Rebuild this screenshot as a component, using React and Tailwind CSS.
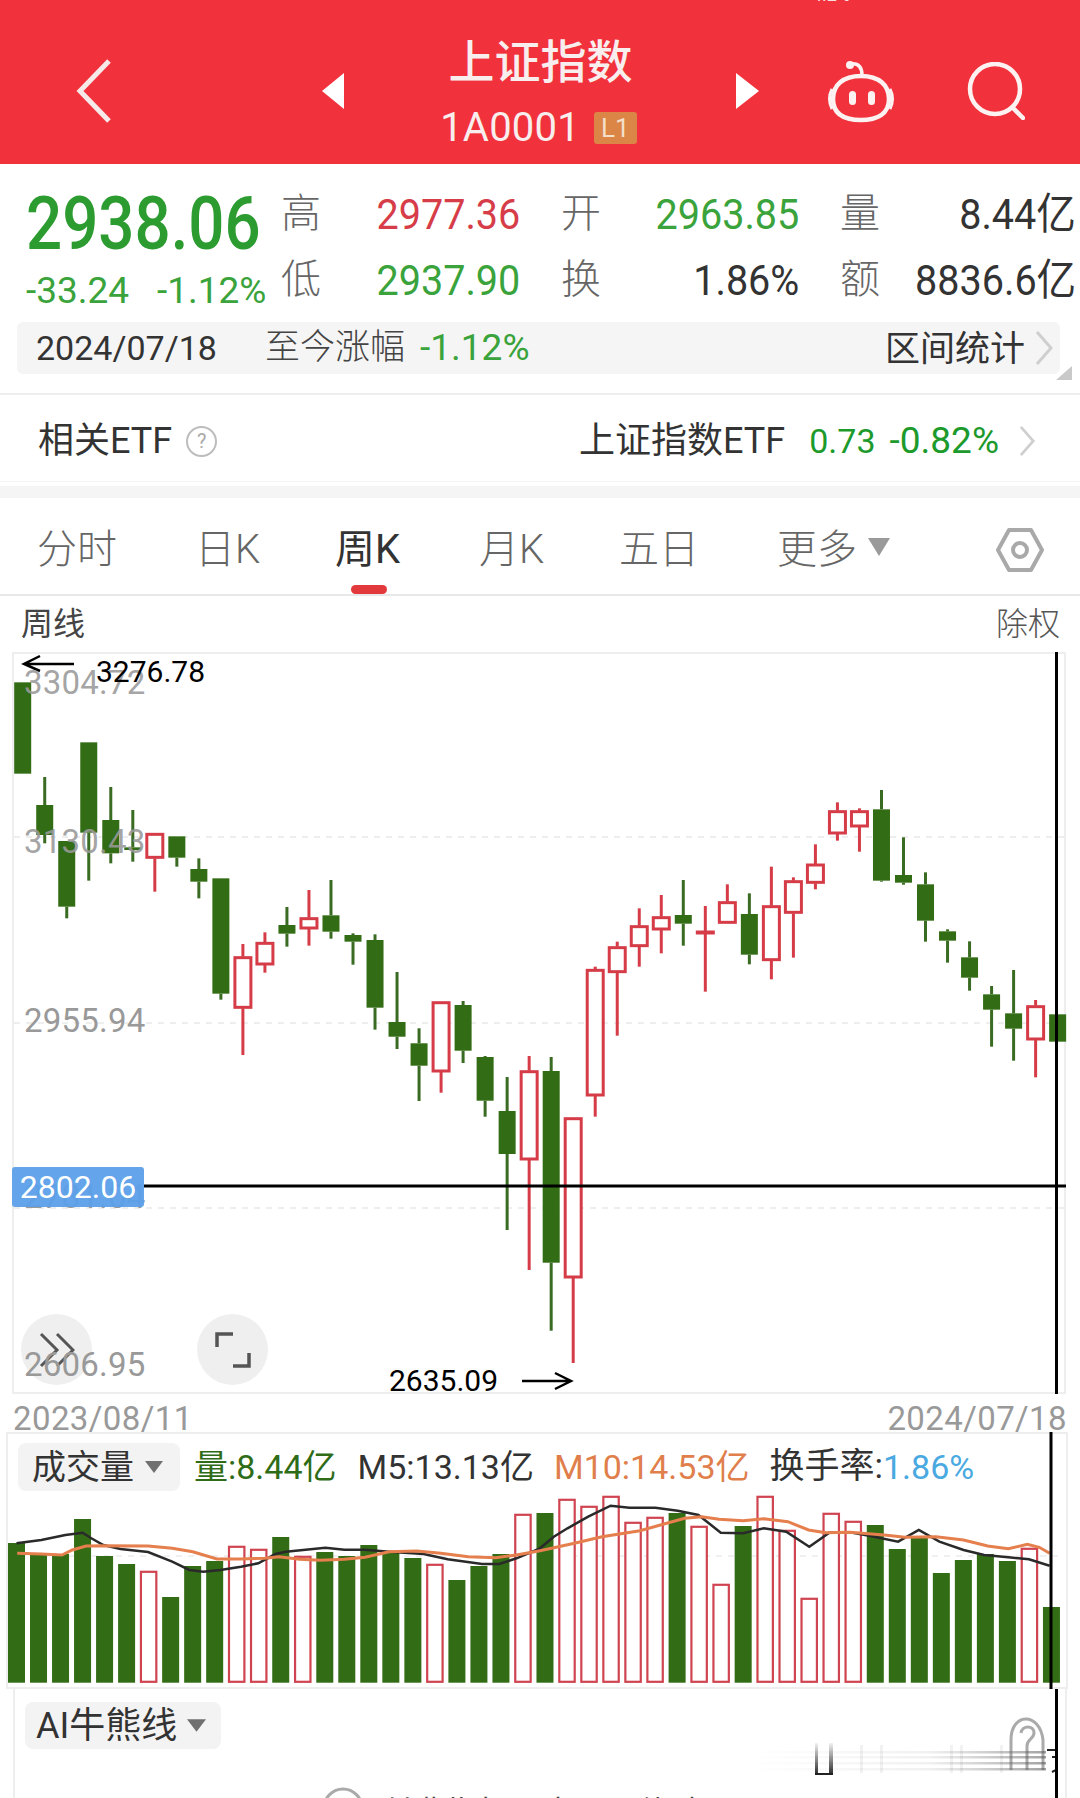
import React from "react";

const A = (v) => 650 + v / 3;
const B = (v) => 750 + v / 3;
const G = "#326c14";
const R = "#d53c47";

// kind, wick top, body top, body bottom, wick bottom (page y)
const candles = [
  ["g", A(97), A(97), A(371), A(371)],
  ["g", A(381), A(465), A(555), A(580)],
  ["g", A(573), A(573), A(770), A(805)],
  ["g", A(277), A(277), A(548), A(692)],
  ["g", A(411), A(510), A(610), A(640)],
  ["g", A(480), A(592), A(600), A(635)],
  ["r", A(550), A(550), A(625), A(725)],
  ["g", A(559), A(559), A(623), A(650)],
  ["g", A(625), A(657), A(695), A(745)],
  ["g", A(685), A(685), A(1031), A(1049)],
  ["r", A(882), A(920), A(1075), 1055],
  ["r", A(847), A(877), A(945), A(968)],
  ["g", A(771), A(825), A(851), A(890)],
  ["r", A(720), A(803), A(837), A(887)],
  ["g", A(690), A(796), A(845), A(866)],
  ["g", A(850), A(855), A(875), A(944)],
  ["g", A(853), A(870), A(1073), A(1139)],
  ["g", 972, 1022, 1036.7, 1049],
  ["g", 1028.3, 1043.3, 1065.7, 1101],
  ["r", 1001.7, 1001.7, 1072, 1092.7],
  ["g", 1001, 1005, 1050.7, 1063],
  ["g", 1056, 1057, 1100.7, 1116.7],
  ["g", 1077, 1111, 1154, 1230],
  ["r", 1056, 1070.7, 1160, 1270],
  ["g", 1057, 1071, 1262.7, 1330.7],
  ["r", 1117.7, 1117.7, 1278, 1363],
  ["r", B(650), B(658), B(1038), B(1100)],
  ["r", B(575), B(590), B(668), B(857)],
  ["r", B(475), B(527), B(590), B(650)],
  ["r", B(435), B(500), B(540), B(610)],
  ["g", B(390), B(495), B(521), B(587)],
  ["r", B(468), B(543), B(547), B(725)],
  ["r", B(403), B(455), B(520), B(520)],
  ["g", B(430), B(492), B(614), B(643)],
  ["r", B(350), B(467), B(632), B(688)],
  ["r", B(382), B(392), B(490), B(623)],
  ["r", B(283), B(342), B(400), B(418)],
  ["r", B(157), B(182), B(252), B(272)],
  ["r", B(175), B(182), B(231), B(305)],
  ["g", B(120), B(178), B(392), B(395)],
  ["g", B(262), B(375), B(398), B(404)],
  ["g", B(367), B(403), B(512), B(575)],
  ["g", B(538), B(544), B(572), B(638)],
  ["g", B(574), B(622), B(683), B(722)],
  ["g", B(708), B(733), B(779), B(890)],
  ["g", B(660), B(790), B(836), B(932)],
  ["r", B(750), B(767), B(870), B(982)],
  ["g", B(793), B(793), B(875), B(875)],
];

const volumes = [
  ["g", 429], ["g", 462], ["g", 462], ["g", 357], ["g", 468], ["g", 492], ["r", 513], ["g", 591],
  ["g", 498], ["g", 483], ["r", 438], ["r", 447], ["g", 411], ["r", 468], ["g", 456], ["g", 468],
  ["g", 435], ["g", 456], ["g", 474], ["r", 492], ["g", 540], ["g", 498], ["g", 462], ["r", 342],
  ["g", 339], ["r", 297], ["r", 318], ["r", 288], ["r", 366], ["r", 351], ["g", 339], ["r", 378],
  ["r", 552], ["g", 378], ["r", 288], ["r", 390], ["r", 594], ["r", 339], ["r", 363], ["g", 375],
  ["g", 447], ["g", 414], ["g", 519], ["g", 480], ["g", 462], ["g", 483], ["r", 444], ["g", 621],
];

const toPts = (left, right) =>
  [
    ...left.map(([x, y]) => `${(x / 2.904).toFixed(1)},${(1400 + y / 3).toFixed(1)}`),
    ...right.map(([x, y]) => `${(540 + x / 2.904).toFixed(1)},${(1400 + y / 3).toFixed(1)}`),
  ].join(" ");

const blackLine = toPts(
  [[48,430],[120,420],[190,405],[240,398],[265,415],[300,435],[350,447],[430,456],[500,485],[550,510],[590,515],[640,510],[700,500],[750,490],[800,462],[830,455],[945,443],[1000,449],[1060,449],[1130,455],[1230,462],[1300,478],[1400,492],[1450,492],[1500,475]],
  [[0,445],[40,410],[80,385],[140,350],[205,317],[260,323],[335,323],[400,332],[460,345],[525,398],[590,400],[650,385],[715,395],[782,440],[840,398],[900,397],[960,408],[1040,425],[1100,390],[1160,425],[1230,450],[1290,465],[1360,472],[1420,478],[1480,497]]
);
const orangeLine = toPts(
  [[50,460],[120,462],[180,465],[210,450],[250,438],[300,437],[430,438],[500,445],[560,455],[630,477],[700,477],[770,475],[810,470],[870,478],[930,481],[1000,478],[1060,472],[1130,455],[1210,453],[1280,460],[1360,470],[1440,473],[1500,465]],
  [[0,452],[100,430],[180,410],[290,392],[360,372],[420,355],[470,350],[520,358],[590,362],[650,356],[720,365],[780,390],[830,398],[900,397],[1000,405],[1060,412],[1150,410],[1230,420],[1300,438],[1360,446],[1415,433],[1450,442],[1480,460]]
);

function Chevron({ className }) {
  return (
    <svg viewBox="0 0 19 36" className={className} fill="none" stroke="#cfcfcf" strokeWidth="3">
      <path d="M2 2 L16 18 L2 34" />
    </svg>
  );
}

function Tri({ className }) {
  return (
    <svg viewBox="0 0 18 12" className={className} fill="#707070">
      <path d="M0 0 H18 L9 12 Z" />
    </svg>
  );
}

function CandleChart() {
  return (
    <svg viewBox="0 652 1080 742" className="absolute inset-0 w-[1080px] h-[742px]">
      {[837, 1023, 1208].map((y) => (
        <line key={y} x1="14" x2="1064" y1={y} y2={y} stroke="#e9e9e9" strokeWidth="1.5" strokeDasharray="6 6" />
      ))}
      {candles.map(([k, wt, bt, bb, wb], i) => {
        const x = 22.7 + 22.02 * i;
        const c = k === "g" ? "#3a6b22" : R;
        return (
          <g key={i}>
            <line x1={x} x2={x} y1={wt} y2={bt} stroke={c} strokeWidth="3" />
            <line x1={x} x2={x} y1={bb} y2={wb} stroke={c} strokeWidth="3" />
            {k === "g" ? (
              <rect x={x - 8.5} y={bt} width="17" height={bb - bt} fill={G} />
            ) : (
              <rect x={x - 8} y={bt + 1} width="16" height={Math.max(bb - bt - 2, 1)} fill="#fff" stroke={R} strokeWidth="3" />
            )}
          </g>
        );
      })}
      <line x1="144" x2="1066" y1="1186" y2="1186" stroke="#000" strokeWidth="3" />
      <line x1="1056.5" x2="1056.5" y1="652" y2="1394" stroke="#000" strokeWidth="3" />
      <path d="M74 664 H24 M40 656 L24 664 L40 671" fill="none" stroke="#000" strokeWidth="2.5" />
      <path d="M522 1381 H571 M555 1373 L571 1381 L555 1389" fill="none" stroke="#000" strokeWidth="2.5" />
    </svg>
  );
}

function VolumeChart() {
  return (
    <svg viewBox="0 1432 1080 258" className="absolute inset-0 w-[1080px] h-[258px]">
      <line x1="8" x2="1064" y1="1556" y2="1556" stroke="#ececec" strokeWidth="1.5" strokeDasharray="6 6" />
      {volumes.map(([k, v], i) => {
        const x = 16.5 + 22.02 * i;
        const t = 1400 + v / 3;
        return k === "g" ? (
          <rect key={i} x={x - 8.5} y={t} width="17" height={1682.7 - t} fill={G} />
        ) : (
          <rect key={i} x={x - 7.7} y={t + 0.8} width="15.4" height={1681 - t} fill="#fff" stroke="#cf4450" strokeWidth="2.2" />
        );
      })}
      <polyline points={blackLine} fill="none" stroke="#2a2a2a" strokeWidth="2.5" />
      <polyline points={orangeLine} fill="none" stroke="#e57f4d" strokeWidth="3" />
      <line x1="1051" x2="1051" y1="1432" y2="1689" stroke="#000" strokeWidth="3" />
    </svg>
  );
}

function Tab({ children, className }) {
  return <span className={"text-[40px] leading-[46px] " + className}>{children}</span>;
}

function Stat({ label, value, color }) {
  return (
    <div className="flex justify-between">
      <span className="text-[40px] leading-[66px] text-[#666] font-light">{label}</span>
      <span className={"text-right text-[43px] leading-[66px] whitespace-nowrap scale-x-[0.92] origin-right " + color}>{value}</span>
    </div>
  );
}

export default function App() {
  return (
    <div className="relative w-[1080px] h-[1798px] overflow-hidden bg-white font-['Roboto','Noto_Sans_CJK_SC',sans-serif] text-[#333]">
      {/* header */}
      <header className="relative h-[164px] bg-[#f1323c] flex items-center pt-[17px]">
        <svg viewBox="0 0 36 64" className="ml-[76px] w-[36px] h-[64px]" fill="none" stroke="#f6e9e9" strokeWidth="5">
          <path d="M33 2 L4 32 L33 62" />
        </svg>
        <svg viewBox="0 0 22 36" className="ml-[210px] w-[22px] h-[36px]" fill="#fff">
          <path d="M22 0 V36 L0 18 Z" />
        </svg>
        <div className="ml-[101px] w-[191px] flex flex-col items-center">
          <div className="text-[46px] leading-[56px] font-medium text-[#f8eeee] whitespace-nowrap">上证指数</div>
          <div className="mt-[18px] flex items-center text-[#f8eeee] -translate-x-[2px]">
            <span className="text-[40px] leading-[40px] tracking-[0.2px] font-normal">1A0001</span>
            <span className="ml-[14px] w-[43px] h-[32px] bg-[#db8546] rounded-[3px] flex items-center justify-center text-[26px] leading-none text-[#f3dfca]">L1</span>
          </div>
        </div>
        <svg viewBox="0 0 23 36" className="ml-[100px] w-[23px] h-[36px]" fill="#fff">
          <path d="M0 0 V36 L23 18 Z" />
        </svg>
        <svg viewBox="0 0 68 64" className="ml-[68px] w-[68px] h-[64px]" fill="none" stroke="#fdf2f2" strokeWidth="4.5">
          <circle cx="23" cy="6" r="4" fill="#fdf2f2" stroke="none" />
          <path d="M24 5 C32 4 35 9 35 16" strokeWidth="3.5" />
          <path d="M34 17 C52 17 62 26 62 40 C62 55 50 61 34 61 C17 61 6 55 6 40 C6 26 16 17 34 17 Z" />
          <path d="M5 30 Q0 40 5 50 M63 30 Q68 40 63 50" strokeWidth="3" />
          <rect x="22" y="32" width="7" height="14" rx="3.5" fill="#fdf2f2" stroke="none" />
          <rect x="41" y="32" width="7" height="14" rx="3.5" fill="#fdf2f2" stroke="none" />
        </svg>
        <svg viewBox="0 0 58 58" className="ml-[72px] w-[58px] h-[58px]" fill="none" stroke="#fdf2f2" strokeWidth="4.5">
          <circle cx="28" cy="27" r="25" />
          <path d="M46 46 L56 56" strokeLinecap="round" />
        </svg>
        <div className="absolute left-[812px] -top-[14px] text-[18px] leading-[18px] text-[#f6dede]">4.2%</div>
      </header>

      {/* quote */}
      <section className="h-[231px] border-b-2 border-[#eeeeee] relative">
        <div className="flex pt-[17px] pl-[26px]">
          <div className="w-[255px] shrink-0">
            <div className="h-[84px] text-[74px] leading-[84px] font-medium text-[#2c9b30] whitespace-nowrap scale-x-[0.86] origin-left translate-y-[1px]">2938.06</div>
            <div className="flex mt-[6px] text-[37px] leading-[40px] text-[#3aa33b]">
              <span className="w-[131px]">-33.24</span>
              <span>-1.12%</span>
            </div>
          </div>
          <div className="shrink-0 grid grid-cols-[239px_238px_236px] gap-x-[41px] grid-rows-[66px_66px]">
            <Stat label="高" value="2977.36" color="text-[#d63d48]" />
            <Stat label="开" value="2963.85" color="text-[#3aa33b]" />
            <Stat label="量" value="8.44亿" color="text-[#333]" />
            <Stat label="低" value="2937.90" color="text-[#3aa33b]" />
            <Stat label="换" value="1.86%" color="text-[#333]" />
            <Stat label="额" value="8836.6亿" color="text-[#333]" />
          </div>
        </div>
        <div className="relative mt-[9px] ml-[17px] w-[1043px] h-[52px] bg-[#f5f5f5] rounded-[6px] flex items-center pl-[19px] pr-[6px]">
          <span className="w-[229px] text-[34px] leading-[40px]">2024/07/18</span>
          <span className="text-[35px] leading-[40px] text-[#444] font-light">至今涨幅</span>
          <span className="ml-[15px] text-[37px] leading-[40px] text-[#3aa33b]">-1.12%</span>
          <span className="ml-auto text-[35px] leading-[40px] translate-y-[2px]">区间统计</span>
          <Chevron className="ml-[10px] w-[19px] h-[36px]" />
          <div className="absolute -right-[12px] -bottom-[6px] w-0 h-0 border-l-[16px] border-l-transparent border-b-[14px] border-b-[#c9c9c9]" />
        </div>
      </section>

      {/* ETF */}
      <section className="h-[86px] flex items-center pl-[38px] pr-[44px] pt-[6px]">
        <span className="text-[36px] leading-[42px] text-[#333]">相关ETF</span>
        <span className="ml-[14px] w-[31px] h-[31px] rounded-full border-2 border-[#bdbdbd] flex items-center justify-center text-[20px] leading-none text-[#aaa]">?</span>
        <span className="ml-auto text-[36px] leading-[42px] text-[#333]">上证指数ETF</span>
        <span className="ml-[24px] text-[34px] leading-[42px] text-[#1c9a2c]">0.73</span>
        <span className="ml-[14px] text-[37px] leading-[42px] text-[#1c9a2c]">-0.82%</span>
        <Chevron className="ml-[20px] w-[17px] h-[32px]" />
      </section>
      <div className="h-[5px] border-t border-[#f4f4f4]" />
      <div className="h-[12px] bg-[#f5f5f5]" />

      {/* tabs */}
      <nav className="relative h-[98px] border-b-2 border-[#e8e8e8] text-[#666]">
        <div className="flex items-center pt-[29px] pl-[37px]">
          <Tab className="w-[158px] font-light">分时</Tab>
          <Tab className="w-[140px] font-light">日K</Tab>
          <Tab className="w-[144px] text-[#333]">周K</Tab>
          <Tab className="w-[140px] font-light">月K</Tab>
          <Tab className="w-[158px] font-light">五日</Tab>
          <Tab className="w-[91px] font-light">更多</Tab>
          <svg viewBox="0 0 22 18" className="w-[22px] h-[18px] -translate-y-[3px]" fill="#9a9a9a">
            <path d="M0 0 H22 L11 18 Z" />
          </svg>
          <svg viewBox="0 0 48 46" className="ml-[106px] w-[48px] h-[46px]" fill="none" stroke="#a9a9a9" strokeWidth="4">
            <path d="M13 3 H35 L46 23 L35 43 H13 L2 23 Z" strokeLinejoin="round" />
            <circle cx="24" cy="23" r="7" />
          </svg>
        </div>
        <div className="absolute left-[351px] bottom-[0px] w-[36px] h-[9px] rounded-full bg-[#e23a3c]" />
      </nav>

      {/* title row */}
      <div className="h-[56px] flex items-center justify-between pl-[21px] pr-[20px] text-[#444]">
        <span className="text-[32px] leading-[40px]">周线</span>
        <span className="text-[32px] leading-[40px] text-[#555] font-light">除权</span>
      </div>

      {/* candles */}
      <section className="relative h-[742px]">
        <div className="ml-[12px] w-[1054px] h-full border-2 border-[#eeeeee]" />
        <div className="absolute left-[21px] top-[662px] w-[71px] h-[71px] rounded-full bg-[#efefef] flex items-center justify-center">
          <svg viewBox="0 0 36 36" className="w-[36px] h-[36px]" fill="none" stroke="#555" strokeWidth="3">
            <path d="M2 2 L18 18 L2 34 M18 2 L34 18 L18 34" />
          </svg>
        </div>
        <div className="absolute left-[197px] top-[662px] w-[71px] h-[71px] rounded-full bg-[#efefef] flex items-center justify-center">
          <svg viewBox="0 0 36 36" className="w-[36px] h-[36px]" fill="none" stroke="#555" strokeWidth="3.5">
            <path d="M2 15 V2 H18 M34 21 V34 H18" />
          </svg>
        </div>
        <CandleChart />
        <div className="absolute left-[24px] top-[11px] text-[33px] leading-[40px] tracking-[0.2px] text-[#999]/90">3304.72</div>
        <div className="absolute left-[24px] top-[170px] text-[33px] leading-[40px] tracking-[0.2px] text-[#999]/90">3130.43</div>
        <div className="absolute left-[24px] top-[349px] text-[33px] leading-[40px] tracking-[0.2px] text-[#999]">2955.94</div>
        <div className="absolute left-[24px] top-[525px] text-[33px] leading-[40px] tracking-[0.2px] text-[#999]">2781.04</div>
        <div className="absolute left-[24px] top-[693px] text-[33px] leading-[40px] tracking-[0.2px] text-[#999]">2606.95</div>
        <div className="absolute left-[96px] top-[2px] text-[30px] leading-[36px] text-black">3276.78</div>
        <div className="absolute left-[12px] top-[515px] w-[132px] h-[40px] rounded-[3px] bg-[#5b9fe9]/95 flex items-center justify-center text-[32px] leading-none text-white">2802.06</div>
        <div className="absolute left-[389px] top-[711px] text-[30px] leading-[36px] text-black">2635.09</div>
      </section>

      {/* dates */}
      <div className="h-[38px] flex items-end justify-between pl-[13px] pr-[13px] text-[33px] leading-[26px] tracking-[0.4px] text-[#999]">
        <span>2023/08/11</span>
        <span>2024/07/18</span>
      </div>

      {/* volume */}
      <section className="relative h-[257px]">
        <div className="ml-[6px] w-[1062px] h-[257px] border-2 border-[#eeeeee]" />
        <VolumeChart />
        <div className="absolute left-0 top-[11px] w-full flex items-center pl-[18px]">
          <div className="w-[162px] h-[48px] rounded-[8px] bg-[#f3f3f3] flex items-center pl-[14px]">
            <span className="text-[34px] leading-[40px] text-[#333]">成交量</span>
            <Tri className="ml-[11px] w-[18px] h-[12px]" />
          </div>
          <span className="ml-[14px] text-[34px] leading-[40px] text-[#2f6c17]">量:8.44亿</span>
          <span className="ml-[21px] text-[34px] leading-[40px] text-[#333]">M5:13.13亿</span>
          <span className="ml-[20px] text-[34px] leading-[40px] text-[#e07f4c]">M10:14.53亿</span>
          <span className="ml-[20px] text-[35px] leading-[40px] text-[#333]">换手率:</span>
          <span className="text-[34px] leading-[40px] text-[#4aa9e1]">1.86%</span>
        </div>
      </section>

      {/* AI panel */}
      <section className="relative h-[109px]">
        <div className="ml-[13px] w-[1054px] h-[120px] border-x-2 border-[#eeeeee]" />
        <div className="absolute left-[25px] top-[13px] w-[196px] h-[47px] rounded-[8px] bg-[#f3f3f3] flex items-center pl-[11px]">
          <span className="text-[36px] leading-[40px] text-[#333]">AI牛熊线</span>
          <Tri className="ml-[10px] w-[19px] h-[13px]" />
        </div>
        <svg viewBox="0 1689 1080 109" className="absolute inset-0 w-[1080px] h-[109px]">
          <defs>
            <linearGradient id="u" x1="0" x2="0" y1="0" y2="1">
              <stop offset="0" stopColor="#000" stopOpacity="0.05" />
              <stop offset="1" stopColor="#000" stopOpacity="0.85" />
            </linearGradient>
            <linearGradient id="h" x1="0" x2="1" y1="0" y2="0">
              <stop offset="0" stopColor="#888" stopOpacity="0" />
              <stop offset="0.6" stopColor="#888" stopOpacity="0.12" />
              <stop offset="1" stopColor="#555" stopOpacity="0.55" />
            </linearGradient>
          </defs>
          <path d="M1011 1770 V1740 C1011 1712 1040 1712 1043 1740 V1770" fill="none" stroke="#aaa" strokeWidth="3" />
          <path d="M1021 1733 C1022 1725 1034 1725 1034 1733 C1034 1739 1027 1739 1027 1746 V1770" fill="none" stroke="#aaa" strokeWidth="3" />
          {[1752, 1757, 1763, 1769].map((y) => (
            <rect key={y} x="750" y={y - 1} width="296" height="2.5" fill="url(#h)" />
          ))}
          <rect x="815" y="1743" width="3" height="32" fill="url(#u)" />
          <rect x="829" y="1743" width="4" height="32" fill="url(#u)" />
          <rect x="815" y="1773" width="18" height="2" fill="#222" />
          {[860, 880, 950, 960, 1000].map((x) => (
            <rect key={x} x={x} y="1745" width="3" height="28" fill="#000" fillOpacity="0.05" />
          ))}
          <path d="M1047 1750 H1055 M1052 1757 H1056 V1770 L1052 1772" fill="none" stroke="#222" strokeWidth="2" />
          <circle cx="343" cy="1808" r="19" fill="none" stroke="#aaa" strokeWidth="3" />
          <line x1="1056.5" x2="1056.5" y1="1689" y2="1798" stroke="#000" strokeWidth="3" />
        </svg>
        <div className="absolute left-[382px] top-[106px] text-[32px] leading-[36px] text-[#444] whitespace-nowrap">付费指标，去开通体验</div>
      </section>
    </div>
  );
}
